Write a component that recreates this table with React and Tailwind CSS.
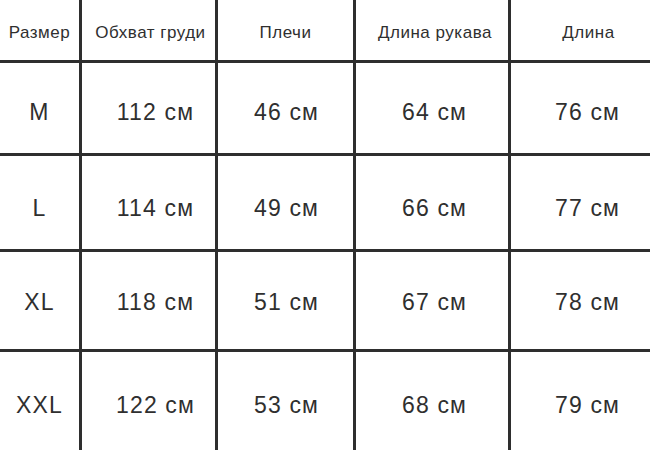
const headers = ['Размер', 'Обхват груди', 'Плечи', 'Длина рукава', 'Длина'];

const rows = [
  { h: 'h-[90px]', pt: 'pt-[8px]', cells: ['M', '112 см', '46 см', '64 см', '76 см'] },
  { h: 'h-[93px]', pt: 'pt-[11px]', cells: ['L', '114 см', '49 см', '66 см', '77 см'] },
  { h: 'h-[97px]', pt: 'pt-[3px]', cells: ['XL', '118 см', '51 см', '67 см', '78 см'] },
  { h: 'h-[98px]', pt: 'pt-[8px]', cells: ['XXL', '122 см', '53 см', '68 см', '79 см'] },
];

// сдвиг текста по колонкам, как на картинке
const shift = ['', 'pl-[14px]', 'pl-[2px]', 'pl-[5px]', 'pl-[14px]'];
const headShift = ['', 'pl-[4px]', 'pl-[0px]', 'pl-[6px]', 'pl-[16px]'];

export default function App() {
  return (
    <div
      className="w-[650px] h-[450px] bg-white text-[#2f2f2f] overflow-hidden"
      style={{ fontFamily: '"Liberation Sans", Arial, sans-serif' }}
    >
      <div className="grid grid-cols-[79px_133px_135px_152px_139px] gap-[3px] bg-[#2e2e2e]">
        {headers.map((t, i) => (
          <div
            key={t}
            className={`h-[60px] bg-white flex items-center justify-center pt-[6px] text-[17px] tracking-[0.03em] ${headShift[i]}`}
          >
            {t}
          </div>
        ))}
        {rows.map((r) =>
          r.cells.map((c, i) => (
            <div
              key={r.cells[0] + i}
              className={`${r.h} ${r.pt} bg-white flex items-center justify-center text-[23px] tracking-[0.05em] ${shift[i]}`}
            >
              {c}
            </div>
          ))
        )}
      </div>
    </div>
  );
}
